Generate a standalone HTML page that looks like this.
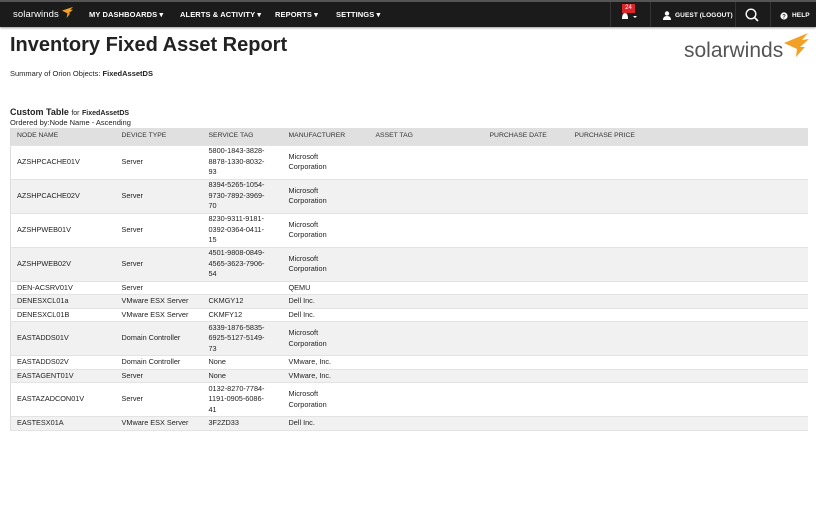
<!DOCTYPE html>
<html><head><meta charset="utf-8"><style>
*{margin:0;padding:0;box-sizing:border-box}
body{width:816px;height:510px;background:#fff;font-family:"Liberation Sans",sans-serif;color:#222;position:relative;overflow:hidden}
.nav{position:absolute;left:0;top:0;width:816px;height:27px;background:#1b1b1b;border-top:2px solid #555;box-shadow:0 1px 2px rgba(0,0,0,.4)}
.nav span{position:absolute;top:8px;color:#fff;font-size:7.5px;font-weight:bold;letter-spacing:.1px}
.sep{position:absolute;top:0;width:1px;height:25px;background:#333}
h1{position:absolute;left:10px;top:34px;font-size:20px;font-weight:bold;color:#222}
.sum{position:absolute;left:10px;top:69px;font-size:7.5px}
.ct{position:absolute;left:10px;top:107px;font-size:9px;font-weight:bold}
.ct small{font-size:7px}
.ob{position:absolute;left:10px;top:118px;font-size:7.5px}
table{position:absolute;left:10px;top:128px;width:798px;border-collapse:collapse;table-layout:fixed;font-size:7.3px;border-left:1px solid #ddd}
td,th{padding:0 0 0 6px;text-align:left;vertical-align:middle;line-height:10.5px;font-weight:normal}
th{background:#e0e0e0;height:17px;font-size:6.8px;color:#333}
tr{border-bottom:1px solid #e3e3e3}
tr.g td{background:#f1f1f1}
tr.s td{height:13.5px}
tr.t td{height:34px}
</style></head><body>
<div class="nav">
<span style="left:13px;top:7px;font-size:9.5px;font-weight:normal">solarwinds</span>
<svg style="position:absolute;left:61px;top:4px" width="13" height="13" viewBox="0 0 14 14"><path d="M1 5 L13 1 L10 4 L13 4 L8 8 L10 8 L6 13 L7 8 Z" fill="#f2a124"/></svg>
<span style="left:89px">MY DASHBOARDS ▾</span>
<span style="left:180px">ALERTS &amp; ACTIVITY ▾</span>
<span style="left:275px">REPORTS ▾</span>
<span style="left:336px">SETTINGS ▾</span>
<div class="sep" style="left:610px"></div><div class="sep" style="left:650px"></div><div class="sep" style="left:735px"></div><div class="sep" style="left:770px"></div>
<div style="position:absolute;left:622px;top:2px;width:13px;height:9px;background:#d9262b;color:#fff;font-size:6px;text-align:center;line-height:9px">24</div>
<svg style="position:absolute;left:620px;top:10px" width="20" height="10"><path d="M2 7 Q2 1 5 1 Q8 1 8 7 Z" fill="#fff"/><path d="M13 4 L17 4 L15 6Z" fill="#fff"/></svg>
<svg style="position:absolute;left:663px;top:9px" width="8" height="9"><circle cx="4" cy="2.5" r="2.2" fill="#fff"/><path d="M0 9 Q0 5 4 5 Q8 5 8 9Z" fill="#fff"/></svg>
<span style="left:675px;top:10px;font-size:6.5px">GUEST (LOGOUT)</span>
<svg style="position:absolute;left:745px;top:6px" width="14" height="14"><circle cx="6" cy="6" r="4.8" stroke="#fff" stroke-width="1.4" fill="none"/><path d="M9.5 9.5 L13 13" stroke="#fff" stroke-width="1.6"/></svg>
<svg style="position:absolute;left:780px;top:10px" width="8" height="8"><circle cx="4" cy="4" r="3.6" fill="#fff"/><text x="4" y="6.3" font-size="6" text-anchor="middle" font-weight="bold" fill="#1b1b1b" font-family="Liberation Sans">?</text></svg>
<span style="left:792px;top:10px;font-size:6.5px">HELP</span>
</div>
<h1>Inventory Fixed Asset Report</h1>
<div style="position:absolute;left:684px;top:39px;font-size:21px;color:#555">solarwinds</div>
<svg style="position:absolute;left:783px;top:31px" width="27" height="28" viewBox="0 0 27 28"><path d="M1 12 L25 2 L19 9 L26 8 L17 16 L22 16 L13 26 L14 18 Z" fill="#f2a124"/></svg>
<div class="sum">Summary of Orion Objects: <b>FixedAssetDS</b></div>
<div class="ct">Custom Table <small style="font-weight:normal">for</small> <small>FixedAssetDS</small></div>
<div class="ob">Ordered by:Node Name - Ascending</div>
<table>
<colgroup><col style="width:105px"><col style="width:87px"><col style="width:80px"><col style="width:87px"><col style="width:114px"><col style="width:85px"><col></colgroup>
<tr><th>NODE NAME</th><th>DEVICE TYPE</th><th>SERVICE TAG</th><th>MANUFACTURER</th><th>ASSET TAG</th><th>PURCHASE DATE</th><th>PURCHASE PRICE</th></tr>
<tr class="t"><td>AZSHPCACHE01V</td><td>Server</td><td>5800-1843-3828-<br>8878-1330-8032-<br>93</td><td>Microsoft<br>Corporation</td><td></td><td></td><td></td></tr>
<tr class="t g"><td>AZSHPCACHE02V</td><td>Server</td><td>8394-5265-1054-<br>9730-7892-3969-<br>70</td><td>Microsoft<br>Corporation</td><td></td><td></td><td></td></tr>
<tr class="t"><td>AZSHPWEB01V</td><td>Server</td><td>8230-9311-9181-<br>0392-0364-0411-<br>15</td><td>Microsoft<br>Corporation</td><td></td><td></td><td></td></tr>
<tr class="t g"><td>AZSHPWEB02V</td><td>Server</td><td>4501-9808-0849-<br>4565-3623-7906-<br>54</td><td>Microsoft<br>Corporation</td><td></td><td></td><td></td></tr>
<tr class="s"><td>DEN-ACSRV01V</td><td>Server</td><td></td><td>QEMU</td><td></td><td></td><td></td></tr>
<tr class="s g"><td>DENESXCL01a</td><td>VMware ESX Server</td><td>CKMGY12</td><td>Dell Inc.</td><td></td><td></td><td></td></tr>
<tr class="s"><td>DENESXCL01B</td><td>VMware ESX Server</td><td>CKMFY12</td><td>Dell Inc.</td><td></td><td></td><td></td></tr>
<tr class="t g"><td>EASTADDS01V</td><td>Domain Controller</td><td>6339-1876-5835-<br>6925-5127-5149-<br>73</td><td>Microsoft<br>Corporation</td><td></td><td></td><td></td></tr>
<tr class="s"><td>EASTADDS02V</td><td>Domain Controller</td><td>None</td><td>VMware, Inc.</td><td></td><td></td><td></td></tr>
<tr class="s g"><td>EASTAGENT01V</td><td>Server</td><td>None</td><td>VMware, Inc.</td><td></td><td></td><td></td></tr>
<tr class="t"><td>EASTAZADCON01V</td><td>Server</td><td>0132-8270-7784-<br>1191-0905-6086-<br>41</td><td>Microsoft<br>Corporation</td><td></td><td></td><td></td></tr>
<tr class="s g"><td>EASTESX01A</td><td>VMware ESX Server</td><td>3F2ZD33</td><td>Dell Inc.</td><td></td><td></td><td></td></tr>
</table>
</body></html>
